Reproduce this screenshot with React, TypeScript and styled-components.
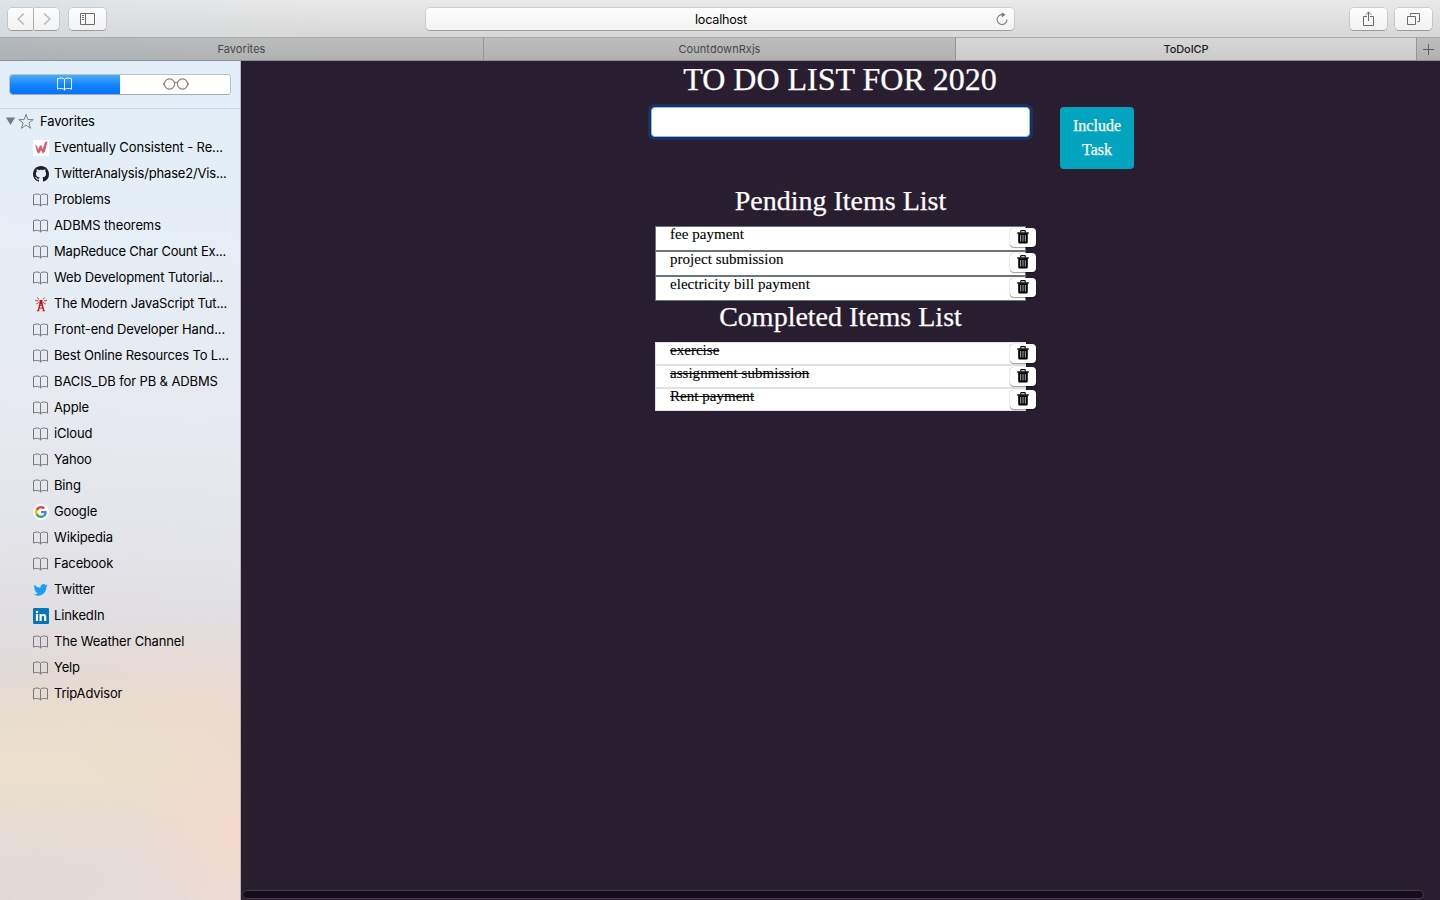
import React from "react";
import styled, { createGlobalStyle } from "styled-components";

const ui = `Inter, "Liberation Sans", sans-serif`;
const serif = `"Liberation Serif", "Times New Roman", serif`;

const GlobalStyle = createGlobalStyle`
  * { box-sizing: border-box; }
  body { margin: 0; overflow: hidden; }
  svg { display: block; flex: none; }
`;

const Window = styled.div`
  width: 1440px;
  height: 900px;
  display: flex;
  flex-direction: column;
  overflow: hidden;
  background: #291e30;
  font-family: ${ui};
`;

const Toolbar = styled.header`
  height: 38px;
  flex: none;
  display: flex;
  align-items: flex-start;
  justify-content: space-between;
  padding: 8px 8px 0;
  background:
    linear-gradient(90deg, rgba(205, 220, 231, 0.4), rgba(215, 220, 226, 0.3) 130px, rgba(230, 225, 225, 0) 330px),
    linear-gradient(#e9e9e9, #d8d8d8);
  border-bottom: 1px solid #a9a9a9;
`;

const ToolGroup = styled.div<{ $gap: number; $align?: string }>`
  width: 200px;
  display: flex;
  gap: ${(p) => p.$gap}px;
  justify-content: ${(p) => p.$align ?? "flex-start"};
`;

const NavPair = styled.div`
  display: flex;
  gap: 1px;
`;

const ToolButton = styled.button<{ $w: number; $r?: string }>`
  width: ${(p) => p.$w}px;
  height: 22px;
  padding: 0;
  border: 0;
  display: flex;
  align-items: center;
  justify-content: center;
  color: #6b6b6b;
  background: linear-gradient(#fdfdfd, #f2f2f2);
  border-radius: ${(p) => p.$r ?? "4px"};
  box-shadow: 0 0 0 0.5px rgba(0, 0, 0, 0.22), 0 1px 0 rgba(0, 0, 0, 0.2);
`;

const AddressBar = styled.div`
  width: 588px;
  height: 22px;
  display: flex;
  align-items: center;
  padding: 0 6px 0 27px;
  border-radius: 4px;
  background: linear-gradient(#fefefe, #f3f3f3);
  box-shadow: 0 0 0 0.5px rgba(0, 0, 0, 0.18), 0 1px 0 rgba(0, 0, 0, 0.2);
  span {
    flex: 1;
    text-align: center;
    font-size: 12.6px;
    line-height: 22px;
    color: #000;
    letter-spacing: -0.2px;
    padding: 1px 7px 0 0;
  }
`;

const TabBar = styled.nav`
  height: 23px;
  flex: none;
  display: flex;
  background: linear-gradient(#bdbdbd, #b1b1b1);
  border-bottom: 1px solid #8f9095;
`;

const Tab = styled.div<{ $w: number; $active?: boolean; $cool?: boolean }>`
  width: ${(p) => p.$w}px;
  height: 22px;
  border-right: 1px solid #959595;
  text-align: center;
  font-size: 11px;
  font-weight: ${(p) => (p.$active ? 500 : 400)};
  letter-spacing: ${(p) => (p.$active ? -0.1 : 0.05)}px;
  line-height: 22px;
  color: ${(p) => (p.$active ? "#222" : "#484848")};
  background: ${(p) =>
    p.$active
      ? "linear-gradient(#d7d7d7, #cbcbcb)"
      : p.$cool
      ? "linear-gradient(90deg, rgba(165,178,188,.35), rgba(180,180,180,0) 330px)"
      : "transparent"};
`;

const NewTab = styled.div`
  flex: 1;
  display: flex;
  align-items: center;
  justify-content: center;
`;

const Body = styled.div`
  flex: 1;
  min-height: 0;
  display: flex;
`;

const Sidebar = styled.aside`
  width: 241px;
  flex: none;
  border-right: 1px solid rgba(150, 145, 150, 0.55);
  background:
    radial-gradient(ellipse 110px 90px at 240px 775px, rgba(246, 218, 204, 0.85), rgba(246, 218, 204, 0) 100%),
    radial-gradient(ellipse 280px 110px at 20px 825px, rgba(224, 217, 215, 0.95), rgba(224, 217, 215, 0) 100%),
    radial-gradient(ellipse 300px 100px at 30px 712px, rgba(236, 226, 204, 0.9), rgba(236, 226, 204, 0) 100%),
    radial-gradient(ellipse 260px 120px at 210px 670px, rgba(238, 219, 203, 0.95), rgba(238, 219, 203, 0) 100%),
    linear-gradient(184deg, #e2eef8 0%, #e5eef6 20%, #e7ebf1 38%, #e4e5eb 55%, #e1dfe3 65%, #e0d9d7 74%, #e7dccd 84%, #ecdfd9 100%);
`;

const SegmentArea = styled.div`
  height: 48px;
  padding: 13px 9px 0;
  border-bottom: 1px solid #ccd6de;
`;

const Segments = styled.div`
  width: 222px;
  height: 21px;
  display: flex;
  border-radius: 4px;
  overflow: hidden;
  border: 1px solid #b9c0c7;
  border-bottom-color: #a3abb2;
  background: #fff;
`;

const Segment = styled.div<{ $on?: boolean }>`
  width: ${(p) => (p.$on ? 112 : 110)}px;
  margin: ${(p) => (p.$on ? "-1px 0 -1px -1px" : "0")};
  padding: ${(p) => (p.$on ? "0 0 1px" : "0 0 1px 2px")};
  display: flex;
  align-items: center;
  justify-content: center;
  color: ${(p) => (p.$on ? "#fff" : "#7d7d7d")};
  background: ${(p) => (p.$on ? "linear-gradient(#55b0fb, #0f82fc 55%, #056ffb)" : "#fff")};
`;

const Bookmarks = styled.ul`
  list-style: none;
  margin: 0;
  padding: 0;
`;

const FolderRow = styled.li`
  height: 26px;
  display: flex;
  align-items: center;
  padding: 0 0 2px 6px;
  font-size: 13px;
  color: #000;
  span { margin-left: 6px; letter-spacing: -0.15px; }
  svg + svg { margin-left: 3px; }
`;

const BookmarkRow = styled.li`
  height: 26px;
  display: flex;
  align-items: center;
  padding-left: 33px;
  font-size: 13px;
  line-height: 24px;
  color: #000;
  white-space: nowrap;
`;

const IconSlot = styled.span`
  width: 16px;
  height: 16px;
  margin-right: 5px;
  display: flex;
  align-items: center;
  flex: none;
  color: #77777c;
`;

const Label = styled.span<{ $ls: number }>`
  padding-bottom: 2px;
  letter-spacing: ${(p) => p.$ls}px;
`;

const Page = styled.main`
  flex: 1;
  display: flex;
  flex-direction: column;
  background: #291e30;
  color: #fff;
  font-family: ${serif};
  -webkit-text-stroke: 0.25px currentColor;
`;

const Content = styled.div`
  width: 379px;
  margin-left: 410px;
  flex: 1;
`;

const Title = styled.h1`
  margin: 0 1px 0 0;
  height: 46px;
  font-size: 32px;
  font-weight: 400;
  line-height: 37px;
  text-align: center;
  white-space: nowrap;
`;

const TaskForm = styled.div`
  width: 483px;
  height: 79px;
  display: flex;
  align-items: flex-start;
  justify-content: space-between;
`;

const TaskInput = styled.input`
  width: 379px;
  height: 30px;
  padding: 4px 8px;
  border: 1px solid #80bdff;
  border-radius: 4px;
  background: #fff;
  outline: 0;
  box-shadow: 0 0 0 3px #1c3160;
`;

const IncludeButton = styled.button`
  width: 74px;
  height: 62px;
  padding: 7px 0;
  border: 0;
  border-radius: 4px;
  background: #02a4bf;
  color: #fff;
  font-family: ${serif};
  font-size: 16px;
  line-height: 24px;
  -webkit-text-stroke: 0.25px currentColor;
`;

const Subtitle = styled.h2<{ $h: number; $lh: number }>`
  margin: 0;
  height: ${(p) => p.$h}px;
  font-size: 28px;
  font-weight: 400;
  line-height: ${(p) => p.$lh}px;
  text-align: center;
`;

const TaskList = styled.ul`
  width: 371px;
  margin: 0 0 0 4px;
  padding: 0;
  list-style: none;
  -webkit-text-stroke: 0.1px #000;
`;

const TaskRow = styled.li<{ $done?: boolean }>`
  height: ${(p) => (p.$done ? 23 : 25)}px;
  display: flex;
  justify-content: space-between;
  padding-left: 14px;
  border: 1px solid ${(p) => (p.$done ? "#dee2e6" : "#6c757d")};
  background: #fff;
  color: #000;
  font-size: 15px;
  line-height: 14px;
  letter-spacing: 0.03px;
  text-decoration: ${(p) => (p.$done ? "line-through" : "none")};
`;

const DeleteButton = styled.button`
  width: 26px;
  height: 19px;
  margin: 1px -11px 0 0;
  padding: 0 0 1px;
  flex: none;
  border: 0;
  border-radius: 4px;
  display: flex;
  align-items: center;
  justify-content: center;
  color: #000;
  background: #fff;
  box-shadow: 0 0 1px rgba(0, 0, 0, 0.5), 0 1px 1px rgba(0, 0, 0, 0.35);
`;

const ScrollTrack = styled.div`
  height: 9px;
  width: 1182px;
  margin: 0 0 1px 1px;
  border: 1px solid #463c4d;
  border-radius: 5px;
  background: #140d19;
`;

const BookIcon = () => (
  <svg width="16" height="14" viewBox="0 0 16 14" fill="none" stroke="currentColor" strokeWidth="1">
    <path d="M7.5 2.3C6.4.8 2.8.6.5 1.8v10.3c2.2-1.1 5.8-.9 7 .6 1.2-1.5 4.8-1.7 7-.6V1.8C12.2.6 8.6.8 7.5 2.3v11" />
  </svg>
);

const GlassesIcon = () => (
  <svg width="26" height="12" viewBox="0 0 26 12" fill="none" stroke="currentColor" strokeWidth="1.1">
    <circle cx="6.5" cy="6" r="5.1" />
    <circle cx="19.5" cy="6" r="5.1" />
    <path d="M11.2 5.2q1.8-1.4 3.6 0M1.5 5l-1 1 1 1M24.5 5l1 1-1 1" />
  </svg>
);

const StarIcon = () => (
  <svg width="16" height="16" viewBox="0 0 16 16" fill="none" stroke="#77818a" strokeWidth="1">
    <path d="M8 1.3l1.8 5.3h5.4l-4.3 3.3 1.6 5.4L8 12.1l-4.5 3.2 1.6-5.4L.8 6.6h5.4z" />
  </svg>
);

const WIcon = () => (
  <svg width="16" height="16" viewBox="0 0 16 16">
    <path d="M0 0h16v16H0z" fill="#fff" />
    <path d="M2.2 4.5L4.2 6.2 5 9.5 7 5.600 8.700 5.500 9.500 9.200 12 2.300 14.500 1.300 12.200 11 10 13.700 8 10 6 13.700 4 12z" fill="#d95d6c" />
  </svg>
);

const GithubIcon = () => (
  <svg width="16" height="16" viewBox="0 0 16 16" fill="#1b1f23">
    <path d="M8 0C3.58 0 0 3.58 0 8c0 3.54 2.29 6.53 5.47 7.59.4.07.55-.17.55-.38 0-.19-.01-.82-.01-1.49-2.01.37-2.53-.49-2.69-.94-.09-.23-.48-.94-.82-1.13-.28-.15-.68-.52-.01-.53.63-.01 1.08.58 1.23.82.72 1.21 1.87.87 2.33.66.07-.52.28-.87.51-1.07-1.78-.2-3.64-.89-3.64-3.95 0-.87.31-1.59.82-2.15-.08-.2-.36-1.02.08-2.12 0 0 .67-.21 2.2.82.64-.18 1.32-.27 2-.27s1.36.09 2 .27c1.53-1.04 2.2-.82 2.2-.82.44 1.1.16 1.92.08 2.12.51.56.82 1.27.82 2.15 0 3.07-1.87 3.75-3.65 3.95.29.25.54.73.54 1.48 0 1.07-.01 1.93-.01 2.2 0 .21.15.46.55.38A8.01 8.01 0 0 0 16 8c0-4.42-3.58-8-8-8z" />
  </svg>
);

const TowerIcon = () => (
  <svg width="16" height="16" viewBox="0 0 16 16" fill="none" stroke="#c8110d">
    <path d="M7.5 6L5.2 15M8.5 6L10.8 15" strokeWidth="1.3" />
    <path d="M6.5 9.2h3M6 12h4M4 14.8h2.3M9.7 14.8H12" strokeWidth="1.1" />
    <path d="M8 4v4" strokeWidth="2.8" />
    <path d="M6 3.2L4.2 1.4M5.5 5L2 4.3M5.7 6.5L3.2 8M10 3.2l1.8-1.8M10.5 5l3.5-.7M10.3 6.5L12.8 8" strokeWidth=".8" />
  </svg>
);

const GoogleIcon = () => (
  <svg width="16" height="16" viewBox="0 0 16 16">
    <circle cx="8" cy="8" r="8" fill="#fff" />
    <g transform="translate(2 2) scale(.25)">
      <path fill="#EA4335" d="M24 9.5c3.54 0 6.71 1.22 9.21 3.6l6.85-6.85C35.9 2.38 30.47 0 24 0 14.62 0 6.51 5.38 2.56 13.22l7.98 6.19C12.43 13.72 17.74 9.5 24 9.5z" />
      <path fill="#4285F4" d="M46.98 24.55c0-1.57-.15-3.09-.38-4.55H24v9.02h12.94c-.58 2.96-2.26 5.48-4.78 7.18l7.73 6c4.51-4.18 7.09-10.36 7.09-17.65z" />
      <path fill="#FBBC05" d="M10.53 28.59A14.5 14.5 0 0 1 9.77 24c0-1.6.27-3.14.76-4.59l-7.98-6.19A23.9 23.9 0 0 0 0 24c0 3.88.92 7.54 2.56 10.78l7.97-6.19z" />
      <path fill="#34A853" d="M24 48c6.48 0 11.93-2.13 15.89-5.81l-7.73-6c-2.15 1.45-4.92 2.3-8.16 2.3-6.26 0-11.57-4.22-13.47-9.91l-7.98 6.19C6.51 42.62 14.62 48 24 48z" />
    </g>
  </svg>
);

const TwitterIcon = () => (
  <svg width="16" height="16" viewBox="0 0 16 16">
    <path
      transform="translate(.6 .8) scale(.59)"
      fill="#1d9bf8"
      d="M24 4.56a9.8 9.8 0 0 1-2.83.78 4.93 4.93 0 0 0 2.17-2.73 9.9 9.9 0 0 1-3.13 1.2 4.92 4.92 0 0 0-8.38 4.48C7.69 8.1 4.07 6.13 1.64 3.16a4.93 4.93 0 0 0 1.52 6.57 4.9 4.9 0 0 1-2.23-.61c-.05 2.28 1.58 4.41 3.95 4.89a4.9 4.9 0 0 1-2.22.08 4.93 4.93 0 0 0 4.6 3.42A9.9 9.9 0 0 1 0 19.54a13.94 13.94 0 0 0 7.55 2.21c9.14 0 14.3-7.72 13.99-14.64A10 10 0 0 0 24 4.56z"
    />
  </svg>
);

const LinkedInIcon = () => (
  <svg width="16" height="16" viewBox="0 0 16 16">
    <rect width="16" height="16" rx="1.2" fill="#0577b5" />
    <circle cx="4" cy="4" r="1.25" fill="#fff" />
    <path d="M2.9 6.1h2.2v7H2.9zM6.5 6.1h2.1v1c.4-.7 1.2-1.2 2.2-1.2 2 0 2.5 1.4 2.5 3.2v4h-2.2V9.5c0-.9-.1-1.7-1.1-1.7S8.7 8.6 8.7 9.5v3.6H6.5z" fill="#fff" />
  </svg>
);

const TrashIcon = () => (
  <svg width="12" height="14" viewBox="0 0 12 14">
    <path d="M3.7 2.5V1.5q0-.9.9-.9h2.8q.9 0 .9.9v1" fill="none" stroke="#000" strokeWidth="1.1" />
    <path d="M.3 2.3h11.4v1.5H.3z" />
    <path d="M1.2 3.5h9.6V12q0 1.5-1.4 1.5H2.6Q1.2 13.5 1.2 12z" />
    <path d="M3.7 5v6.500M6 5v6.500M8.300 5v6.500" stroke="#c4c4c4" strokeWidth=".9" />
  </svg>
);

const bookmarks: { text: string; icon?: React.FC; ls?: number }[] = [
  { text: "Eventually Consistent - Re...", icon: WIcon, ls: -0.12 },
  { text: "TwitterAnalysis/phase2/Vis...", icon: GithubIcon, ls: -0.17 },
  { text: "Problems" },
  { text: "ADBMS theorems", ls: -0.11 },
  { text: "MapReduce Char Count Ex...", ls: -0.18 },
  { text: "Web Development Tutorial..." },
  { text: "The Modern JavaScript Tut...", icon: TowerIcon, ls: -0.19 },
  { text: "Front-end Developer Hand...", ls: -0.13 },
  { text: "Best Online Resources To L...", ls: -0.16 },
  { text: "BACIS_DB for PB & ADBMS", ls: -0.12 },
  { text: "Apple" },
  { text: "iCloud" },
  { text: "Yahoo" },
  { text: "Bing" },
  { text: "Google", icon: GoogleIcon },
  { text: "Wikipedia" },
  { text: "Facebook" },
  { text: "Twitter", icon: TwitterIcon },
  { text: "LinkedIn", icon: LinkedInIcon },
  { text: "The Weather Channel" },
  { text: "Yelp" },
  { text: "TripAdvisor", ls: -0.2 },
];

const pending = ["fee payment", "project submission", "electricity bill payment"];
const completed = ["exercise", "assignment submission", "Rent payment"];

const Task = ({ text, done }: { text: string; done?: boolean }) => (
  <TaskRow $done={done}>
    <span>{text}</span>
    <DeleteButton aria-label="Delete">
      <TrashIcon />
    </DeleteButton>
  </TaskRow>
);

export default function App() {
  return (
    <Window>
      <GlobalStyle />
      <Toolbar>
        <ToolGroup $gap={10}>
          <NavPair>
            <ToolButton $w={25} $r="4px 1px 1px 4px" aria-label="Back">
              <svg width="8" height="12" viewBox="0 0 8 12" fill="none" stroke="#b8b8b8" strokeWidth="1.5"><path d="M6.8.5L1.2 6l5.6 5.5" /></svg>
            </ToolButton>
            <ToolButton $w={25} $r="1px 4px 4px 1px" aria-label="Forward">
              <svg width="8" height="12" viewBox="0 0 8 12" fill="none" stroke="#b8b8b8" strokeWidth="1.5"><path d="M1.2.5L6.8 6l-5.6 5.5" /></svg>
            </ToolButton>
          </NavPair>
          <ToolButton $w={37} aria-label="Sidebar">
            <svg width="15" height="12" viewBox="0 0 15 12" fill="none" stroke="currentColor"><path d="M.5.5h14v11H.5zM5.5.5v11M2 2.5h2M2 4.5h2M2 6.5h2" /></svg>
          </ToolButton>
        </ToolGroup>
        <AddressBar>
          <span>localhost</span>
          <svg width="12" height="14" viewBox="0 0 12 14" fill="none" stroke="#777" strokeWidth="1.1">
            <path d="M6.5 2.7A4.9 4.9 0 1 0 10.9 7.5" />
            <path d="M5.8.3L9.5 2.8 5.8 5.3z" fill="#777" stroke="none" />
          </svg>
        </AddressBar>
        <ToolGroup $gap={8} $align="flex-end">
          <ToolButton $w={37} aria-label="Share">
            <svg width="11" height="16" viewBox="0 0 11 16" fill="none" stroke="currentColor"><path d="M4 5.5H.5v9h10v-9H7M5.5 10V1M2.7 3.8L5.5 1l2.8 2.8" /></svg>
          </ToolButton>
          <ToolButton $w={37} aria-label="Tabs">
            <svg width="13" height="12" viewBox="0 0 13 12" fill="none" stroke="currentColor"><path d="M.5 3.5h8v8h-8zM3.5 2.5v-2h9v8h-2" /></svg>
          </ToolButton>
        </ToolGroup>
      </Toolbar>
      <TabBar>
        <Tab $w={484} $cool>Favorites</Tab>
        <Tab $w={472}>CountdownRxjs</Tab>
        <Tab $w={461} $active>ToDoICP</Tab>
        <NewTab>
          <svg width="11" height="11" viewBox="0 0 11 11" stroke="#5f5f5f"><path d="M5.5 0v11M0 5.5h11" /></svg>
        </NewTab>
      </TabBar>
      <Body>
        <Sidebar>
          <SegmentArea>
            <Segments>
              <Segment $on><BookIcon /></Segment>
              <Segment><GlassesIcon /></Segment>
            </Segments>
          </SegmentArea>
          <Bookmarks>
            <FolderRow>
              <svg width="9" height="8" viewBox="0 0 9 8" fill="#6f7a83"><path d="M0 .5h9L4.5 8z" /></svg>
              <StarIcon />
              <span>Favorites</span>
            </FolderRow>
            {bookmarks.map(({ text, icon: Icon = BookIcon, ls = -0.15 }) => (
              <BookmarkRow key={text}>
                <IconSlot><Icon /></IconSlot>
                <Label $ls={ls}>{text}</Label>
              </BookmarkRow>
            ))}
          </Bookmarks>
        </Sidebar>
        <Page>
          <Content>
            <Title>TO DO LIST FOR 2020</Title>
            <TaskForm>
              <TaskInput aria-label="Task" />
              <IncludeButton>Include<br />Task</IncludeButton>
            </TaskForm>
            <Subtitle $h={40} $lh={30}>Pending Items List</Subtitle>
            <TaskList>{pending.map((t) => <Task key={t} text={t} />)}</TaskList>
            <Subtitle $h={41} $lh={32}>Completed Items List</Subtitle>
            <TaskList>{completed.map((t) => <Task key={t} text={t} done />)}</TaskList>
          </Content>
          <ScrollTrack />
        </Page>
      </Body>
    </Window>
  );
}
